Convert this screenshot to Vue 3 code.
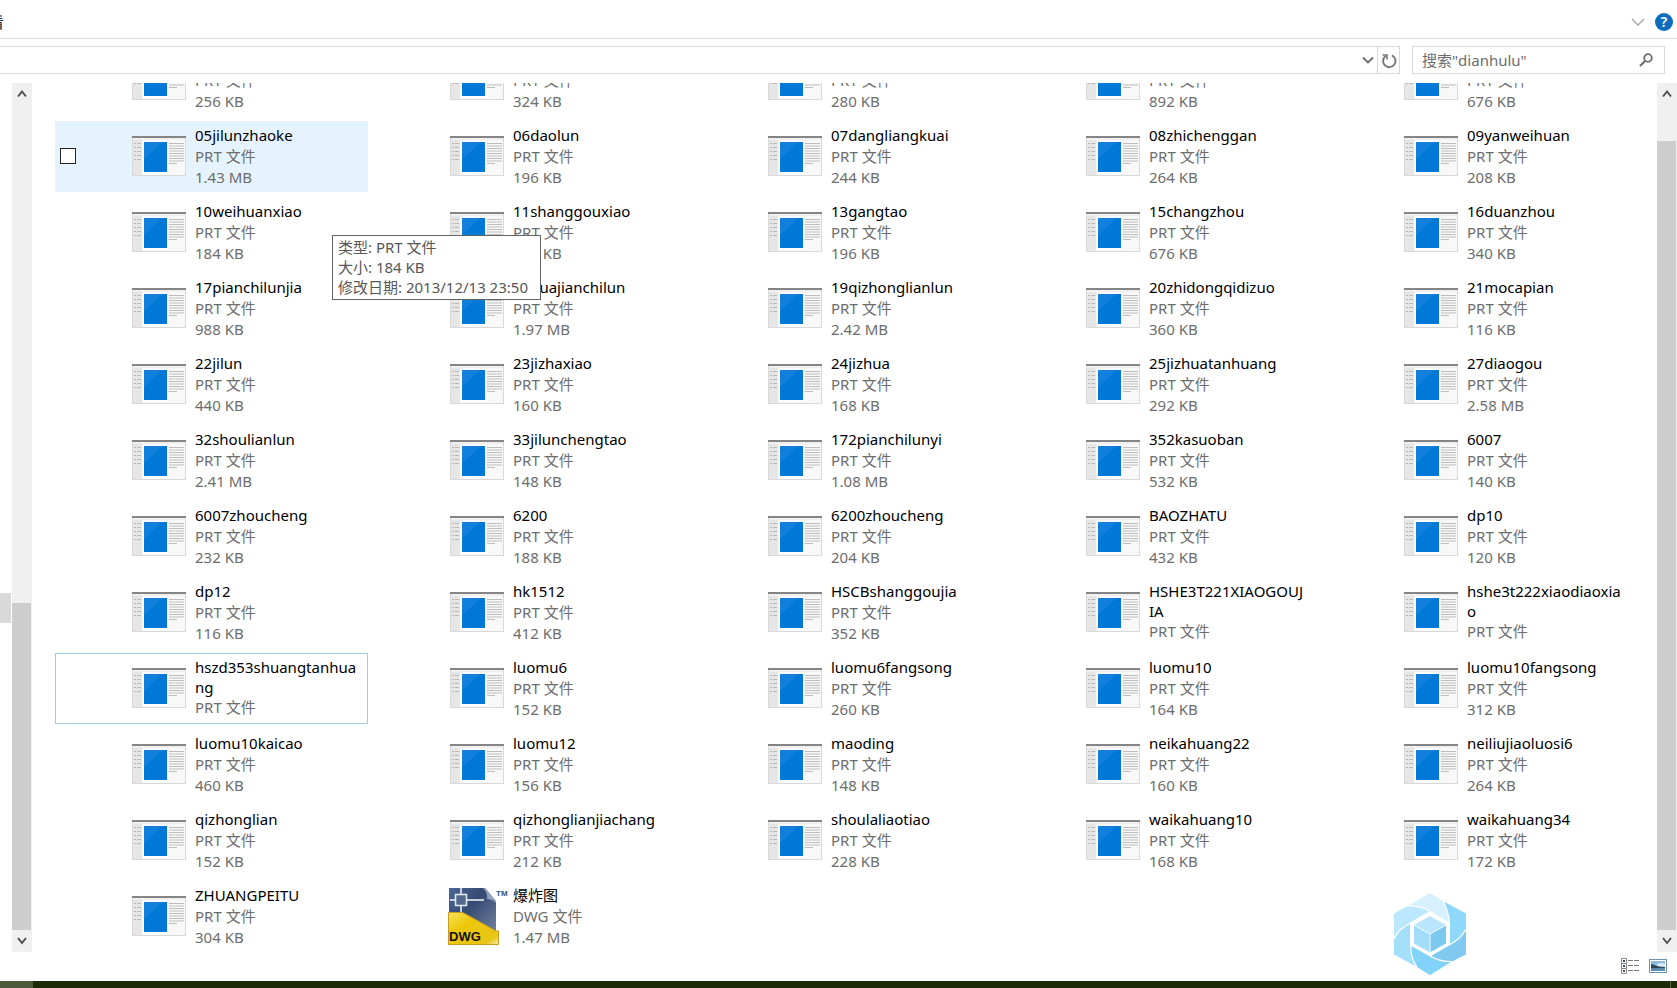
<script setup>
import { ref } from 'vue'

const query = ref('')
const address = ref('')

const rows = [
  [['', '256 KB'], ['', '324 KB'], ['', '280 KB'], ['', '892 KB'], ['', '676 KB']],
  [['05jilunzhaoke', '1.43 MB'], ['06daolun', '196 KB'], ['07dangliangkuai', '244 KB'], ['08zhichenggan', '264 KB'], ['09yanweihuan', '208 KB']],
  [['10weihuanxiao', '184 KB'], ['11shanggouxiao', '184 KB'], ['13gangtao', '196 KB'], ['15changzhou', '676 KB'], ['16duanzhou', '340 KB']],
  [['17pianchilunjia', '988 KB'], ['18huajianchilun', '1.97 MB'], ['19qizhonglianlun', '2.42 MB'], ['20zhidongqidizuo', '360 KB'], ['21mocapian', '116 KB']],
  [['22jilun', '440 KB'], ['23jizhaxiao', '160 KB'], ['24jizhua', '168 KB'], ['25jizhuatanhuang', '292 KB'], ['27diaogou', '2.58 MB']],
  [['32shoulianlun', '2.41 MB'], ['33jilunchengtao', '148 KB'], ['172pianchilunyi', '1.08 MB'], ['352kasuoban', '532 KB'], ['6007', '140 KB']],
  [['6007zhoucheng', '232 KB'], ['6200', '188 KB'], ['6200zhoucheng', '204 KB'], ['BAOZHATU', '432 KB'], ['dp10', '120 KB']],
  [['dp12', '116 KB'], ['hk1512', '412 KB'], ['HSCBshanggoujia', '352 KB'], ['HSHE3T221XIAOGOUJ|IA', ''], ['hshe3t222xiaodiaoxia|o', '']],
  [['hszd353shuangtanhua|ng', ''], ['luomu6', '152 KB'], ['luomu6fangsong', '260 KB'], ['luomu10', '164 KB'], ['luomu10fangsong', '312 KB']],
  [['luomu10kaicao', '460 KB'], ['luomu12', '156 KB'], ['maoding', '148 KB'], ['neikahuang22', '160 KB'], ['neiliujiaoluosi6', '264 KB']],
  [['qizhonglian', '152 KB'], ['qizhonglianjiachang', '212 KB'], ['shoulaliaotiao', '228 KB'], ['waikahuang10', '168 KB'], ['waikahuang34', '172 KB']],
  [['ZHUANGPEITU', '304 KB'], ['爆炸图', '1.47 MB', 'DWG']]
]

const files = rows.flat().map(([name, size, kind = 'PRT'], index) => ({
  id: index,
  lines: name.split('|'),
  size,
  kind,
  hovered: name.startsWith('05'),
  focused: name.startsWith('hszd')
}))
</script>

<template>
  <div class="window">
    <header class="ribbon">
      <button class="tab" type="button">查看</button>
      <div class="ribbon-tools">
        <button class="plain" type="button" aria-label="展开功能区">
          <svg width="14" height="14" viewBox="0 0 14 14"><path d="M1 4l6 6 6-6" fill="none" stroke="#a3a3a3" stroke-width="1.3" /></svg>
        </button>
        <button class="help" type="button" aria-label="帮助">?</button>
      </div>
    </header>

    <div class="nav">
      <div class="address">
        <input v-model="address" class="address-input" type="text" aria-label="地址" />
        <button class="plain drop" type="button" aria-label="以前的位置">
          <svg width="12" height="12" viewBox="0 0 12 12"><path d="M1 3.5l5 5 5-5" fill="none" stroke="#6b6b6b" stroke-width="1.8" /></svg>
        </button>
        <button class="plain refresh" type="button" aria-label="刷新">
          <svg width="16" height="16" viewBox="0 0 16 16">
            <path d="M11 2.400A6.200 6.200 0 1 1 4.600 3" fill="none" stroke="#777" stroke-width="1.9" />
            <path d="M1.500 2h4.500v4.500" fill="none" stroke="#777" stroke-width="1.6" />
          </svg>
        </button>
      </div>
      <div class="search">
        <input v-model="query" type="text" aria-label="搜索" placeholder='搜索"dianhulu"' />
        <button class="plain" type="button" aria-label="开始搜索">
          <svg width="14" height="14" viewBox="0 0 14 14">
            <circle cx="9" cy="5" r="3.8" fill="none" stroke="#6e6e6e" stroke-width="1.8" />
            <path d="M6.3 7.8L1 13" stroke="#6e6e6e" stroke-width="2.2" />
          </svg>
        </button>
      </div>
    </div>

    <main class="body">
      <div class="tree-edge"><span class="tree-item"></span></div>
      <div class="scroll left">
        <button class="plain arrow" type="button" aria-label="导航向上滚动">
          <svg width="12" height="12" viewBox="0 0 12 12"><path d="M2 8.500l4-5 4 5" fill="none" stroke="#505050" stroke-width="2" /></svg>
        </button>
        <div class="thumb"></div>
        <button class="plain arrow" type="button" aria-label="导航向下滚动">
          <svg width="12" height="12" viewBox="0 0 12 12"><path d="M2 3l4 5 4-5" fill="none" stroke="#505050" stroke-width="2" /></svg>
        </button>
      </div>

      <section class="pane">
        <ul class="grid">
          <li
            v-for="file in files"
            :key="file.id"
            class="tile"
            :class="{ hovered: file.hovered, focused: file.focused }"
          >
            <div class="check">
              <input v-if="file.hovered" type="checkbox" :aria-label="file.lines[0]" />
            </div>
            <div class="icon">
              <svg v-if="file.kind === 'PRT'" width="54" height="40" viewBox="0 0 54 40">
                <rect x=".5" y=".5" width="53" height="39" fill="#f8f8f8" stroke="#d9d9d9" />
                <rect x="1" y="2" width="9" height="37" fill="#e6e6e6" />
                <rect x="0" y="0" width="54" height="2" fill="#858585" />
                <rect x="1" y="2" width="52" height="2" fill="#f0f0f0" />
                <path d="M2 7.5h2m1 0h4M2 11.5h2m1 0h4M2 15.5h2m1 0h4M2 19.5h2m1 0h4M2 23.5h2m1 0h4" stroke="#b9b9b9" />
                <rect x="11" y="5" width="25" height="32" fill="#fff" />
                <rect x="12" y="6" width="23" height="30" fill="#0078d7" />
                <path d="M12 6h19L12 23z" fill="#1a86df" opacity=".6" />
                <path d="M37 7.5h15M37 10h15M37 12.5h15M37 15h15M37 17.5h15M37 20h15M37 22.5h15M37 25h15M37 27.5h8" stroke="#bdbdbd" />
              </svg>
              <svg v-else width="64" height="64" viewBox="0 0 64 64">
                <defs>
                  <linearGradient id="sheet" x1="0" y1="0" x2="1" y2="1">
                    <stop offset="0" stop-color="#4a6798" />
                    <stop offset=".4" stop-color="#364a72" />
                    <stop offset="1" stop-color="#7688a3" />
                  </linearGradient>
                  <linearGradient id="band" x1="0" y1="0" x2="1" y2="1">
                    <stop offset="0" stop-color="#f6e25c" />
                    <stop offset=".35" stop-color="#ecc80c" />
                    <stop offset=".85" stop-color="#e9c516" />
                    <stop offset="1" stop-color="#fbeeb0" />
                  </linearGradient>
                </defs>
                <path d="M4 4h36l11 13v38H4z" fill="url(#sheet)" />
                <path d="M38 4h2l11 13v2c-3-3-6-4-9-4 1-4-1-8-4-11z" fill="#8fa1bd" />
                <path d="M5 16h5M21 16h18M16 4v6M16 22v7" stroke="#c6d0dd" stroke-width="2" />
                <rect x="10.5" y="10.5" width="11" height="11" fill="#52698d" stroke="#dfe6ee" stroke-width="1.6" />
                <path d="M3.5 28.5h14C30 35 42 42 51 47h2.5v13.5h-50z" fill="url(#band)" stroke="#c99d20" />
                <text x="4" y="57" class="dwg">DWG</text>
                <text x="51" y="12" class="tm">TM</text>
              </svg>
            </div>
            <div class="info">
              <div class="name" :class="{ wrapped: file.lines.length > 1 }"><template v-for="(line, i) in file.lines" :key="i"><br v-if="i" />{{ line }}</template></div>
              <div class="meta">{{ file.kind }} 文件</div>
              <div v-if="file.size" class="meta">{{ file.size }}</div>
            </div>
          </li>
        </ul>
        <div class="tooltip" role="tooltip">
          <div>类型: PRT 文件</div>
          <div>大小: 184 KB</div>
          <div>修改日期: 2013/12/13 23:50</div>
        </div>
      </section>

      <div class="scroll right">
        <button class="plain arrow" type="button" aria-label="向上滚动">
          <svg width="12" height="12" viewBox="0 0 12 12"><path d="M2 8.500l4-5 4 5" fill="none" stroke="#505050" stroke-width="2" /></svg>
        </button>
        <div class="thumb"></div>
        <button class="plain arrow" type="button" aria-label="向下滚动">
          <svg width="12" height="12" viewBox="0 0 12 12"><path d="M2 3l4 5 4-5" fill="none" stroke="#505050" stroke-width="2" /></svg>
        </button>
      </div>
    </main>

    <footer class="status">
      <button class="plain" type="button" aria-label="详细信息">
        <svg width="18" height="16" viewBox="0 0 18 16">
          <path d="M.5.5h5v15h-5zM.5 5.5h5M.5 10.5h5" fill="#fff" stroke="#8a8a8a" />
          <path d="M2 3h2M2 8h2M2 13h2" stroke="#35506e" stroke-width="2" />
          <path d="M7 2.5h5m1 0h5M7 7.5h5m1 0h5M7 12.5h5m1 0h5" stroke="#777" />
        </svg>
      </button>
      <button class="plain" type="button" aria-label="大缩略图">
        <svg width="18" height="14" viewBox="0 0 18 14">
          <rect x=".5" y=".5" width="17" height="13" fill="#fff" stroke="#6f8fae" />
          <rect x="2" y="2" width="14" height="10" fill="#8dbbe4" />
          <path d="M8 5l4-1 4 1v3H8z" fill="#dcecf8" />
          <path d="M2 5c3 0 5 3 14 3v1.5H2z" fill="#2c4a55" />
          <path d="M2 9.5h14V12H2z" fill="#5d8cb3" />
        </svg>
      </button>
    </footer>

    <div class="taskbar"><span class="taskbar-start"></span><span class="taskbar-end"></span></div>

    <svg class="badge" width="72" height="82" viewBox="0 0 72 82" aria-hidden="true">
      <path d="M36 0L13.5 13Q25 12 36 18L55 30Q55 19 49 8z" fill="#d6f0fd" />
      <path d="M49 8L72 20.500V36Q67 46 55 52V30Q55 19 49 8z" fill="#90d8fa" />
      <path d="M72 36V61.500L58 68.500Q46 69 36 63L55 52Q67 46 72 36z" fill="#80caef" />
      <path d="M58 68.500L36 82 23 74Q16 64 17 53L36 63Q46 69 58 68.500z" fill="#82d3f9" />
      <path d="M23 74L0 61.500V46Q5 35 17 30V53Q16 64 23 74z" fill="#a4dffa" />
      <path d="M0 46V20.500L13.500 13Q25 12 36 18L17 30Q5 35 0 46z" fill="#bce8fd" />
      <path d="M13.500 13Q25 12 36 18M49 8Q55 19 55.500 31M72 36Q67 46 55 52M58 68.500Q46 69 36 63M23 74Q16 64 17 52M0 46Q5 35 17 30" fill="none" stroke="#fff" stroke-width="1.2" />
      <path d="M36 18L56 29.500V52L36 63.500 16 52V29.500z" fill="#fff" />
      <path d="M36 23L52 32 36 41 20 32z" fill="#b9e6fc" />
      <path d="M20 32L36 41V59.500L20 50.500z" fill="#a2dcf8" />
      <path d="M52 32L36 41V59.500L52 50.500z" fill="#7cc9ef" />
      <path d="M20 32L36 41 52 32M36 41V59.500" fill="none" stroke="#f2fbff" />
    </svg>
  </div>
</template>

<style>
body {
  margin: 0;
  background: #fff;
}
</style>

<style scoped>
.window {
  position: relative;
  display: flex;
  flex-direction: column;
  height: 100vh;
  overflow: hidden;
  background: #fff;
  font-family: "Noto Sans", "Noto Sans CJK SC", sans-serif;
  font-size: 15px;
  line-height: 21px;
  color: #000;
}

button,
input {
  box-sizing: border-box;
  margin: 0;
  padding: 0;
  font: inherit;
}

svg {
  display: block;
}

.plain {
  display: flex;
  align-items: center;
  justify-content: center;
  border: 0;
  background: none;
}

.ribbon {
  display: flex;
  flex: none;
  align-items: center;
  justify-content: space-between;
  height: 39px;
  padding: 6px 4px 0 0;
  box-sizing: border-box;
  border-bottom: 1px solid #dadada;
}

.tab {
  margin-left: -26px;
  border: 0;
  background: none;
  color: #2b2b3a;
}

.ribbon-tools {
  display: flex;
  align-items: center;
  gap: 10px;
}

.help {
  width: 18px;
  height: 18px;
  border: 0;
  border-radius: 50%;
  background: #0f6cbd;
  color: #fff;
  font-size: 14px;
  font-weight: 600;
  line-height: 18px;
}

.nav {
  display: flex;
  flex: none;
  gap: 12px;
  padding: 7px 12px 9px 0;
}

.address,
.search {
  display: flex;
  height: 28px;
  box-sizing: border-box;
  border: 1px solid #d9d9d9;
}

.address {
  flex: 1;
  border-left: 0;
}

.address-input {
  flex: 1;
  min-width: 0;
  border: 0;
  outline: 0;
}

.drop {
  width: 18px;
}

.refresh {
  width: 22px;
  padding: 2px 0 0 1px;
  border-left: 1px solid #d9d9d9;
}

.search {
  width: 253px;
  align-items: center;
  padding: 0 11px 0 9px;
}

.search input {
  flex: 1;
  min-width: 0;
  border: 0;
  outline: 0;
  background: none;
}

.search input::placeholder {
  color: #6d6d6d;
  opacity: 1;
}

.body {
  display: flex;
  flex: 1;
  min-height: 0;
}

.tree-edge {
  flex: none;
  width: 12px;
  padding-top: 510px;
  box-sizing: border-box;
}

.tree-item {
  display: block;
  width: 11px;
  height: 30px;
  background: #d9d9d9;
}

.scroll {
  display: flex;
  flex: none;
  flex-direction: column;
  width: 20px;
  background: #f0f0f0;
}

.arrow {
  flex: none;
  width: 19px;
  height: 22px;
}

.thumb {
  flex: 1;
  width: 19px;
  background: #cdcdcd;
}

.left .thumb {
  margin-top: 498px;
}

.right .thumb {
  margin-top: 36px;
}

.pane {
  position: relative;
  display: flex;
  flex: 1;
  flex-direction: column;
  justify-content: flex-end;
  min-width: 0;
  overflow: hidden;
}

.grid {
  display: grid;
  grid-template-columns: repeat(5, minmax(0, 1fr));
  gap: 5px;
  margin: 0;
  padding: 0 17px 0 23px;
  list-style: none;
}

.tile {
  display: flex;
  align-items: center;
  height: 71px;
  padding-bottom: 1px;
  box-sizing: border-box;
  border: 1px solid transparent;
}

.hovered {
  background: #e5f3ff;
  border-color: #e5f3ff;
}

.focused {
  border-color: #a3cbe0;
}

.check {
  flex: none;
  width: 67px;
  padding-left: 4px;
}

.check input {
  display: block;
  appearance: none;
  width: 16px;
  height: 16px;
  border: 1px solid #222;
  background: #fff;
}

.icon {
  display: flex;
  flex: none;
  justify-content: center;
  width: 64px;
}

.info {
  flex: 1;
  min-width: 0;
  align-self: flex-start;
  padding: 3px 0 0 4px;
  white-space: nowrap;
}

.name {
  min-height: 21px;
}

.wrapped {
  line-height: 20px;
}

.meta {
  color: #6d6d6d;
}

.tooltip {
  position: absolute;
  top: 152px;
  left: 300px;
  padding: 1px 12px 2px 5px;
  border: 1px solid #646464;
  background: #fff;
  color: #575757;
  line-height: 20px;
  white-space: nowrap;
}

.dwg {
  font: bold 13px "Liberation Sans", sans-serif;
  fill: #14120a;
}

.tm {
  font: bold 8px "Liberation Sans", sans-serif;
  fill: #2c5784;
}

.status {
  display: flex;
  flex: none;
  align-items: center;
  justify-content: flex-end;
  gap: 10px;
  height: 29px;
  padding: 0 10px 1px 0;
  box-sizing: border-box;
}

.taskbar {
  display: flex;
  flex: none;
  justify-content: space-between;
  height: 7px;
  background: #1f2a08;
}

.taskbar-start {
  width: 33px;
  background: #4d5a3a;
}

.taskbar-end {
  width: 6px;
  border-left: 1px solid #5b6545;
}

.badge {
  position: absolute;
  right: 211px;
  bottom: 13px;
}
</style>
